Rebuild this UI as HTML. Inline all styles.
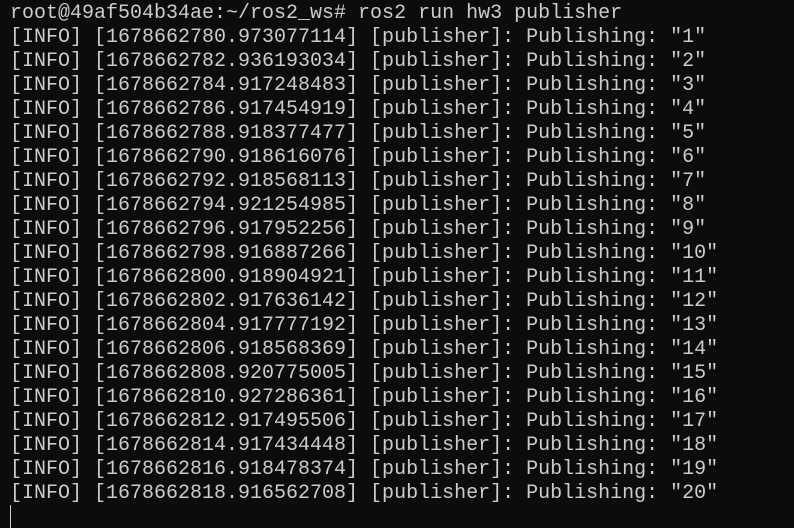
<!DOCTYPE html>
<html><head><meta charset="utf-8"><style>
html,body{margin:0;padding:0;background:#0c0c0c;width:794px;height:528px;overflow:hidden}
pre{margin:0;padding:2px 0 0 10px;font-family:"Liberation Mono","DejaVu Sans Mono",monospace;font-size:20px;line-height:24px;color:#cccccc;white-space:pre}
.cur{position:absolute;left:10px;top:505px;width:1px;height:23px;background:#cccccc}
</style></head><body><pre>root@49af504b34ae:~/ros2_ws# ros2 run hw3 publisher
[INFO] [1678662780.973077114] [publisher]: Publishing: "1"
[INFO] [1678662782.936193034] [publisher]: Publishing: "2"
[INFO] [1678662784.917248483] [publisher]: Publishing: "3"
[INFO] [1678662786.917454919] [publisher]: Publishing: "4"
[INFO] [1678662788.918377477] [publisher]: Publishing: "5"
[INFO] [1678662790.918616076] [publisher]: Publishing: "6"
[INFO] [1678662792.918568113] [publisher]: Publishing: "7"
[INFO] [1678662794.921254985] [publisher]: Publishing: "8"
[INFO] [1678662796.917952256] [publisher]: Publishing: "9"
[INFO] [1678662798.916887266] [publisher]: Publishing: "10"
[INFO] [1678662800.918904921] [publisher]: Publishing: "11"
[INFO] [1678662802.917636142] [publisher]: Publishing: "12"
[INFO] [1678662804.917777192] [publisher]: Publishing: "13"
[INFO] [1678662806.918568369] [publisher]: Publishing: "14"
[INFO] [1678662808.920775005] [publisher]: Publishing: "15"
[INFO] [1678662810.927286361] [publisher]: Publishing: "16"
[INFO] [1678662812.917495506] [publisher]: Publishing: "17"
[INFO] [1678662814.917434448] [publisher]: Publishing: "18"
[INFO] [1678662816.918478374] [publisher]: Publishing: "19"
[INFO] [1678662818.916562708] [publisher]: Publishing: "20"</pre><div class="cur"></div></body></html>
